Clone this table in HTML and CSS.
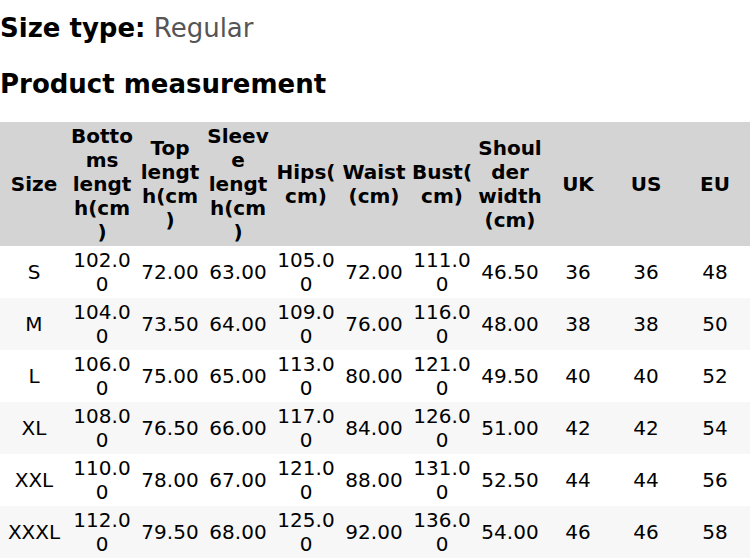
FILE: index.html
```html
<!DOCTYPE html>
<html>
<head>
<meta charset="utf-8">
<link rel="stylesheet" href="styles.css">
</head>
<body>
<div class="size-type"><span class="label">Size type:</span> <span class="value">Regular</span></div>
<div class="heading">Product measurement</div>
<table class="chart">
<colgroup>
<col class="c"><col class="c"><col class="c"><col class="c"><col class="c"><col class="c"><col class="c"><col class="c"><col class="c"><col class="c"><col class="last">
</colgroup>
<thead>
<tr><th>Size</th><th>Bottoms length(cm)</th><th>Top length(cm)</th><th>Sleeve length(cm)</th><th>Hips(cm)</th><th>Waist (cm)</th><th>Bust(cm)</th><th>Shoulder width (cm)</th><th>UK</th><th>US</th><th>EU</th></tr>
</thead>
<tbody>
<tr><td>S</td><td>102.00</td><td>72.00</td><td>63.00</td><td>105.00</td><td>72.00</td><td>111.00</td><td>46.50</td><td>36</td><td>36</td><td>48</td></tr>
<tr><td>M</td><td>104.00</td><td>73.50</td><td>64.00</td><td>109.00</td><td>76.00</td><td>116.00</td><td>48.00</td><td>38</td><td>38</td><td>50</td></tr>
<tr><td>L</td><td>106.00</td><td>75.00</td><td>65.00</td><td>113.00</td><td>80.00</td><td>121.00</td><td>49.50</td><td>40</td><td>40</td><td>52</td></tr>
<tr><td>XL</td><td>108.00</td><td>76.50</td><td>66.00</td><td>117.00</td><td>84.00</td><td>126.00</td><td>51.00</td><td>42</td><td>42</td><td>54</td></tr>
<tr><td>XXL</td><td>110.00</td><td>78.00</td><td>67.00</td><td>121.00</td><td>88.00</td><td>131.00</td><td>52.50</td><td>44</td><td>44</td><td>56</td></tr>
<tr><td>XXXL</td><td>112.00</td><td>79.50</td><td>68.00</td><td>125.00</td><td>92.00</td><td>136.00</td><td>54.00</td><td>46</td><td>46</td><td>58</td></tr>
</tbody>
</table>
</body>
</html>
```
FILE: styles.css
```css
html, body {
  margin: 0;
  padding: 0;
  background: #ffffff;
  font-family: "DejaVu Sans", sans-serif;
  color: #000;
}
.size-type {
  font-size: 26px;
  line-height: 30px;
  padding-top: 13px;
}
.size-type .label {
  font-weight: bold;
}
.size-type .value {
  color: #555555;
}
.heading {
  font-size: 26px;
  line-height: 30px;
  font-weight: bold;
  margin-top: 26px;
  margin-bottom: 23px;
}
.chart {
  width: 100%;
  table-layout: fixed;
  border-collapse: collapse;
  font-size: 20px;
  line-height: 24px;
}
.chart col.c {
  width: 68px;
}
.chart th,
.chart td {
  padding: 2px;
  text-align: center;
  vertical-align: middle;
  overflow-wrap: break-word;
  word-wrap: break-word;
}
.chart thead tr {
  background: #d4d4d4;
}
.chart th {
  font-weight: bold;
}
.chart tbody tr:nth-child(even) {
  background: #f7f7f7;
}
```
